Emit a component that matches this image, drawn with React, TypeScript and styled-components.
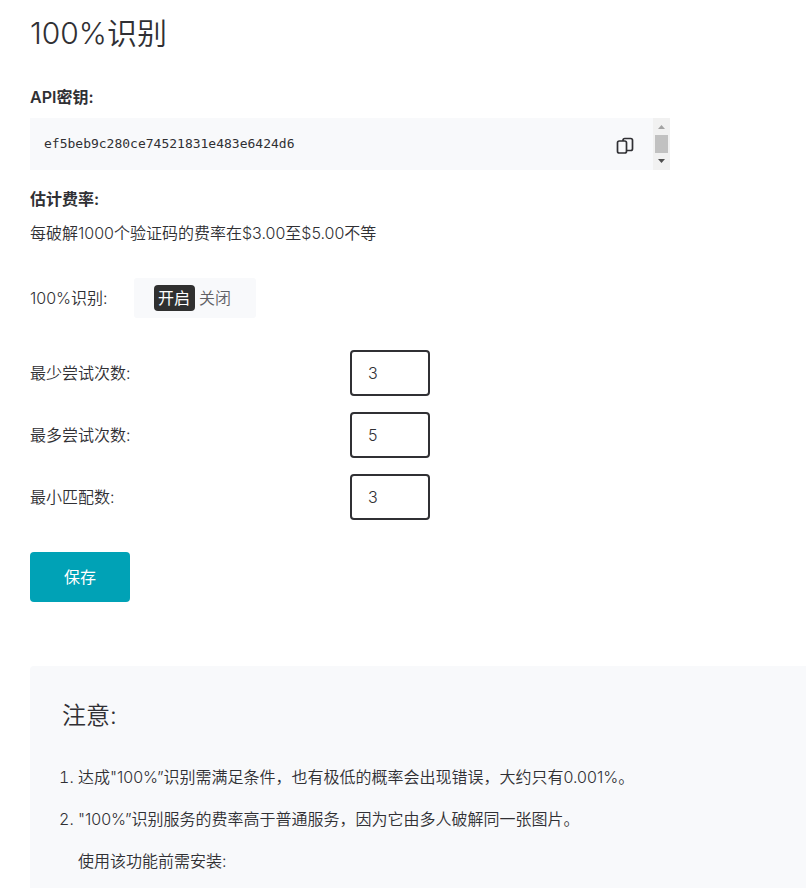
import React, { useState } from "react";
import styled, { createGlobalStyle } from "styled-components";

const GlobalStyle = createGlobalStyle`
  * { box-sizing: border-box; }
  body {
    margin: 0;
    background: #fff;
    color: #303034;
    font-family: Inter, "Noto Sans CJK SC", sans-serif;
    font-size: 16px;
    font-weight: 350;
    line-height: 24px;
  }
  h1, h2, p, ol { margin: 0; }
`;

const Page = styled.main`
  min-height: 100vh;
  display: flex;
  flex-direction: column;
  padding: 10px 0 0 30px;
`;

const Title = styled.h1`
  font-size: 30px;
  font-weight: 350;
  line-height: 46px;
`;

const FieldTitle = styled.h2<{ $spaced?: boolean }>`
  font-size: 16px;
  font-weight: 600;
  line-height: 24px;
  margin-top: ${(p) => (p.$spaced ? 29 : 17)}px;
`;

const KeyBox = styled.div`
  display: flex;
  width: 640px;
  max-width: 100%;
  height: 52px;
  margin-top: 9px;
  background: #f8f9fb;
`;

const Key = styled.code`
  flex: 1;
  padding: 14px;
  font-family: "DejaVu Sans Mono", monospace;
  font-size: 13px;
  font-weight: 400;
`;

const CopyButton = styled.button`
  display: flex;
  align-items: center;
  justify-content: center;
  width: 56px;
  padding: 4px 0 0;
  border: 0;
  background: none;
  color: #303034;
`;

const ScrollTrack = styled.div`
  display: flex;
  flex-direction: column;
  align-items: center;
  width: 17px;
  background: #f1f1f1;
`;

const ScrollArrow = styled.svg`
  width: 17px;
  height: 17px;
`;

const ScrollThumb = styled.div`
  width: 13px;
  flex: 1;
  background: #c1c1c1;
`;

const Rate = styled.p`
  margin-top: 10px;
`;

const SwitchRow = styled.div`
  display: flex;
  align-items: center;
  margin-top: 33px;
`;

const SwitchName = styled.span`
  width: 104px;
`;

const SwitchGroup = styled.div`
  display: flex;
  align-items: center;
  height: 40px;
  padding: 0 20px;
  border-radius: 3px;
  background: #f8f9fb;
`;

const Choice = styled.label<{ $on: boolean }>`
  padding: 1px 5px 1px 4px;
  border-radius: 4px;
  background: ${(p) => (p.$on ? "#303030" : "transparent")};
  color: ${(p) => (p.$on ? "#fff" : "#606064")};
  font-weight: ${(p) => (p.$on ? 400 : 350)};
  cursor: pointer;
`;

const HiddenRadio = styled.input`
  position: absolute;
  opacity: 0;
  pointer-events: none;
`;

const Form = styled.form`
  margin-top: 32px;
`;

const NumberRow = styled.div`
  display: flex;
  align-items: center;
  margin-bottom: 16px;
`;

const NumberLabel = styled.label`
  width: 320px;
`;

const NumberInput = styled.input`
  width: 80px;
  height: 46px;
  padding: 0 16px;
  border: 2px solid #303034;
  border-radius: 4px;
  background: #fff;
  color: #303034;
  font: inherit;
`;

const SaveButton = styled.button`
  width: 100px;
  height: 50px;
  margin-top: 16px;
  border: 0;
  border-radius: 4px;
  background: #00a2b6;
  color: #fff;
  font: inherit;
  font-weight: 400;
`;

const Notice = styled.section`
  flex: 1;
  margin-top: 64px;
  padding: 32px 32px 0;
  border-radius: 4px 0 0 0;
  background: #f8f9fb;
`;

const NoticeTitle = styled.h2`
  font-size: 24px;
  font-weight: 350;
  line-height: 36px;
`;

const NoticeList = styled.ol`
  margin-top: 31px;
  padding-left: 16px;
`;

const NoticeItem = styled.li`
  margin-bottom: 18px;

  &:last-child {
    margin-bottom: 0;
  }
`;

const NoticeText = styled.p`
  margin-top: 18px;
`;

const limits = [
  { id: "min-tries", label: "最少尝试次数:", value: "3" },
  { id: "max-tries", label: "最多尝试次数:", value: "5" },
  { id: "min-matches", label: "最小匹配数:", value: "3" },
];

export default function App() {
  const [enabled, setEnabled] = useState(true);
  return (
    <Page>
      <GlobalStyle />
      <Title>100%识别</Title>
      <FieldTitle $spaced>API密钥:</FieldTitle>
      <KeyBox>
        <Key>ef5beb9c280ce74521831e483e6424d6</Key>
        <CopyButton type="button" aria-label="复制">
          <svg width="18" height="18" viewBox="0 0 18 18" fill="none" stroke="currentColor" strokeWidth="1.7">
            <rect x="1.5" y="4" width="9" height="12" rx="1.8" />
            <path d="M7 4V3.3A1.8 1.8 0 0 1 8.8 1.5H14.7A1.8 1.8 0 0 1 16.5 3.3V11.7A1.8 1.8 0 0 1 14.7 13.5H10.5" />
          </svg>
        </CopyButton>
        <ScrollTrack aria-hidden="true">
          <ScrollArrow viewBox="0 0 17 17">
            <path d="M5 11L8.5 7L12 11Z" fill="#a3a3a3" />
          </ScrollArrow>
          <ScrollThumb />
          <ScrollArrow viewBox="0 0 17 17">
            <path d="M5 6L8.5 10L12 6Z" fill="#505050" />
          </ScrollArrow>
        </ScrollTrack>
      </KeyBox>
      <FieldTitle>估计费率:</FieldTitle>
      <Rate>每破解1000个验证码的费率在$3.00至$5.00不等</Rate>
      <SwitchRow role="radiogroup" aria-labelledby="mode-name">
        <SwitchName id="mode-name">100%识别:</SwitchName>
        <SwitchGroup>
          <Choice $on={enabled}>
            <HiddenRadio type="radio" name="mode" checked={enabled} onChange={() => setEnabled(true)} />
            开启
          </Choice>
          <Choice $on={!enabled}>
            <HiddenRadio type="radio" name="mode" checked={!enabled} onChange={() => setEnabled(false)} />
            关闭
          </Choice>
        </SwitchGroup>
      </SwitchRow>
      <Form onSubmit={(e) => e.preventDefault()}>
        {limits.map((item) => (
          <NumberRow key={item.id}>
            <NumberLabel htmlFor={item.id}>{item.label}</NumberLabel>
            <NumberInput id={item.id} inputMode="numeric" defaultValue={item.value} />
          </NumberRow>
        ))}
        <SaveButton type="submit">保存</SaveButton>
      </Form>
      <Notice>
        <NoticeTitle>注意:</NoticeTitle>
        <NoticeList>
          <NoticeItem>达成"100%”识别需满足条件，也有极低的概率会出现错误，大约只有0.001%。</NoticeItem>
          <NoticeItem>
            "100%”识别服务的费率高于普通服务，因为它由多人破解同一张图片。
            <NoticeText>使用该功能前需安装:</NoticeText>
          </NoticeItem>
        </NoticeList>
      </Notice>
    </Page>
  );
}
